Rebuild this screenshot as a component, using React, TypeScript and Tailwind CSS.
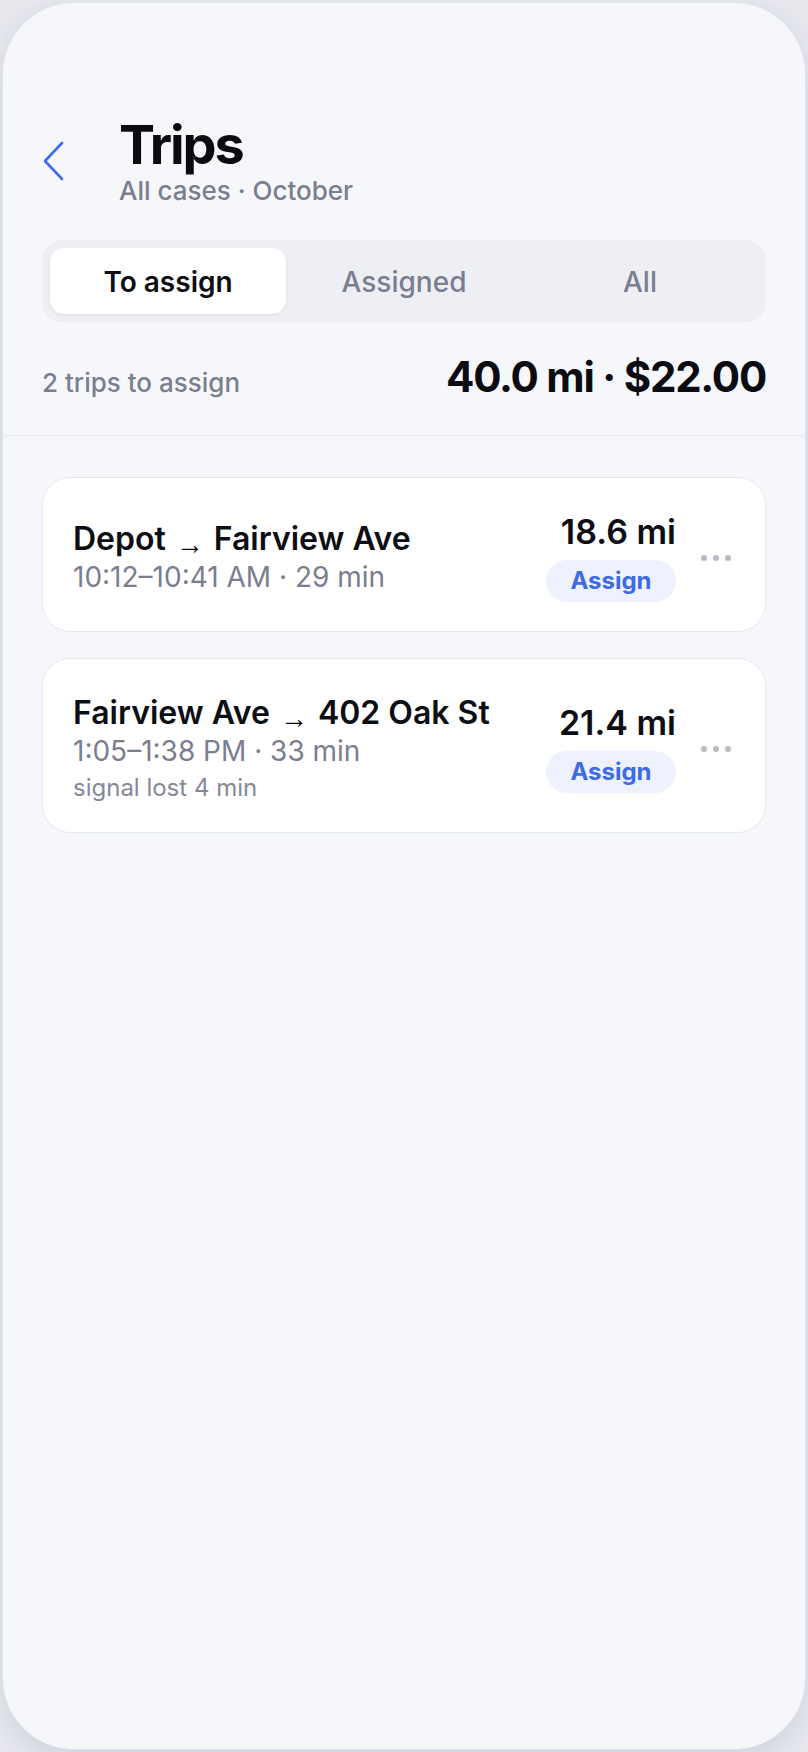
import { useState } from "react";

type Trip = {
  id: number;
  from: string;
  to: string;
  time: string;
  note?: string;
  miles: string;
};

const trips: Trip[] = [
  { id: 1, from: "Depot", to: "Fairview Ave", time: "10:12–10:41 AM · 29 min", miles: "18.6 mi" },
  {
    id: 2,
    from: "Fairview Ave",
    to: "402 Oak St",
    time: "1:05–1:38 PM · 33 min",
    note: "signal lost 4 min",
    miles: "21.4 mi",
  },
];

const tabs = ["To assign", "Assigned", "All"];

function BackIcon() {
  return (
    <svg width="24" height="40" viewBox="0 0 24 40" fill="none">
      <path d="M20 2 L3 20 L20 38" stroke="#3d6cf0" strokeWidth="2.6" strokeLinecap="round" strokeLinejoin="round" />
    </svg>
  );
}

function TripCard({ trip }: { trip: Trip }) {
  return (
    <div className="flex items-center rounded-[28px] border border-[#e6e8ef] bg-white pt-[35px] pb-[29px] pl-[30px] pr-[34px]">
      <div className="flex min-w-0 flex-1 flex-col">
        <span className="text-[32px] leading-[38px] font-semibold text-[#0d0e14]">
          {trip.from}
          <span className="mx-[10px] align-[-4px] font-['Liberation_Sans',sans-serif] text-[28px] leading-[0] font-normal">→</span>
          {trip.to}
        </span>
        <span className="text-[28px] leading-[38px] text-[#7b7e8f]">{trip.time}</span>
        {trip.note && (
          <span className="mt-[3px] text-[24px] leading-[30px] text-[#858898]">{trip.note}</span>
        )}
      </div>
      <div className="flex flex-col items-end">
        <span className="text-[34px] leading-[38px] font-semibold text-[#0d0e14]">{trip.miles}</span>
        <button className="mt-[9px] flex h-[42px] w-[130px] items-center justify-center rounded-full bg-[#edf2fe] text-[24px] font-bold text-[#3e6ae6]">
          Assign
        </button>
      </div>
      <div className="ml-[25px] flex items-center gap-[6px]">
        <span className="h-[6px] w-[6px] rounded-full bg-[#b9bac6]" />
        <span className="h-[6px] w-[6px] rounded-full bg-[#b9bac6]" />
        <span className="h-[6px] w-[6px] rounded-full bg-[#b9bac6]" />
      </div>
    </div>
  );
}

export default function App() {
  const [active, setActive] = useState(0);

  return (
    <div className="h-[1752px] w-[808px] bg-[#e8e9ef] p-[2px] font-['Inter',sans-serif]">
      <div className="h-[1748px] overflow-hidden rounded-[72px] border border-[#e1e3ea] bg-[#f6f7fb] pt-[112px] shadow-[0_10px_30px_rgba(30,40,90,0.12)]">
        <div className="px-[39px]">
          <div className="flex items-center">
            <div className="w-[77px]">
              <BackIcon />
            </div>
            <div className="flex flex-col">
              <h1 className="text-[54px] leading-[60px] font-bold tracking-[-0.04em] text-[#0b0c12]">Trips</h1>
              <span className="text-[26px] leading-[32px] font-medium text-[#7b7e8f]">All cases · October</span>
            </div>
          </div>

          <div className="mt-[33px] grid h-[82px] grid-cols-3 rounded-[20px] bg-[#eeeff5] p-[8px]">
            {tabs.map((tab, i) => (
              <button
                key={tab}
                onClick={() => setActive(i)}
                className={
                  i === active
                    ? "rounded-[14px] bg-white pt-[2px] text-[28px] font-semibold text-[#0d0e14] shadow-[0_1px_3px_rgba(20,30,60,0.08)]"
                    : "rounded-[14px] pt-[2px] text-[28px] font-medium text-[#7b7e8f]"
                }
              >
                {tab}
              </button>
            ))}
          </div>

          <div className="flex items-baseline justify-between pt-[30px] pb-[33px]">
            <span className="text-[26px] font-medium text-[#7b7e8f]">2 trips to assign</span>
            <span className="text-[42px] leading-[50px] font-bold tracking-[-0.03em] text-[#0b0c12]">40.0 mi · $22.00</span>
          </div>
        </div>

        <div className="border-t border-[#e6e8ee]" />

        <div className="flex flex-col gap-[26px] px-[39px] pt-[41px]">
          {trips.map((trip) => (
            <TripCard key={trip.id} trip={trip} />
          ))}
        </div>
      </div>
    </div>
  );
}
